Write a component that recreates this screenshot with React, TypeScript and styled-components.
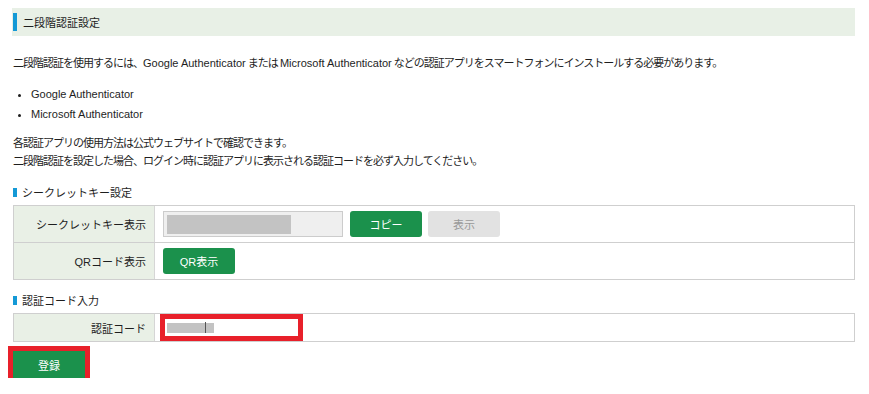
import React from 'react';
import styled, { createGlobalStyle } from 'styled-components';

const GlobalStyle = createGlobalStyle`
  body {
    margin: 0;
    background: #fff;
    color: #1e1e1e;
    font-family: "Liberation Sans", "Noto Sans CJK JP", sans-serif;
    font-size: 11px;
  }
`;

const App = () => {
  return (
    <>
      <GlobalStyle />
      <Page>
        <Header>
          <Accent />
          <HeaderTitle>二段階認証設定</HeaderTitle>
        </Header>

        <Intro>
          二段階認証を使用するには、<Latin>Google Authenticator</Latin> または <Latin>Microsoft Authenticator</Latin> などの認証アプリをスマートフォンにインストールする必要があります。
        </Intro>

        <AppList>
          <li><Latin>Google Authenticator</Latin></li>
          <li><Latin>Microsoft Authenticator</Latin></li>
        </AppList>

        <Notes>
          <p>各認証アプリの使用方法は公式ウェブサイトで確認できます。</p>
          <p>二段階認証を設定した場合、ログイン時に認証アプリに表示される認証コードを必ず入力してください。</p>
        </Notes>

        <SectionTitle>シークレットキー設定</SectionTitle>
        <Table>
          <Row>
            <Label>シークレットキー表示</Label>
            <Value>
              <FakeInput $tone="grey">
                <Mask $width={124} />
              </FakeInput>
              <Button>コピー</Button>
              <Button $disabled>表示</Button>
            </Value>
          </Row>
          <Row>
            <Label>QRコード表示</Label>
            <Value>
              <Button>QR表示</Button>
            </Value>
          </Row>
        </Table>

        <SectionTitle $gap={11}>認証コード入力</SectionTitle>
        <Table>
          <Row $height={27}>
            <Label>認証コード</Label>
            <Value $pad={5}>
              <CodeInput>
                <Mask $width={47} $short />
                <Caret />
              </CodeInput>
            </Value>
          </Row>
        </Table>

        <SubmitRow>
          <SubmitButton>登録</SubmitButton>
        </SubmitRow>
      </Page>
    </>
  );
};

export default App;

const Page = styled.div`
  width: 842px;
  padding: 8px 0 0 13px;
`;

const Header = styled.div`
  height: 28px;
  margin-left: -1px;
  padding-left: 1px;
  background: #e8f0e6;
  display: flex;
  align-items: center;
`;

const Accent = styled.span`
  width: 4px;
  height: 18px;
  background: #1499d6;
`;

const HeaderTitle = styled.span`
  margin-left: 6px;
  font-size: 11px;
`;

const Latin = styled.span`
  letter-spacing: 0;
`;

const Intro = styled.p`
  margin: 18px 0 0;
  line-height: 18px;
  letter-spacing: -1px;
  white-space: nowrap;
`;

const AppList = styled.ul`
  margin: 12px 0 0;
  padding: 0 0 0 18px;
  line-height: 20px;
`;

const Notes = styled.div`
  margin-top: 10px;
  p {
    margin: 0;
    line-height: 18px;
    letter-spacing: -1px;
  }
`;

const SectionTitle = styled.div<{ $gap?: number }>`
  margin-top: ${p => p.$gap ?? 13}px;
  height: 18px;
  display: flex;
  align-items: center;
  &::before {
    content: '';
    width: 4px;
    height: 9px;
    margin-right: 5px;
    background: #1499d6;
  }
`;

const Table = styled.div`
  margin-top: 4px;
  border: 1px solid #cfcfcf;
`;

const Row = styled.div<{ $height?: number }>`
  display: flex;
  height: ${p => p.$height ?? 36}px;
  & + & {
    border-top: 1px solid #cfcfcf;
  }
`;

const Label = styled.div`
  width: 132px;
  padding-right: 8px;
  background: #e9f0e6;
  border-right: 1px solid #d6d6d6;
  display: flex;
  align-items: center;
  justify-content: flex-end;
`;

const Value = styled.div<{ $pad?: number }>`
  flex: 1;
  display: flex;
  align-items: center;
  gap: 6px;
  padding-left: ${p => p.$pad ?? 8}px;
`;

const FakeInput = styled.div<{ $tone?: string }>`
  box-sizing: border-box;
  width: 180px;
  height: 26px;
  border: 1px solid #ccc;
  background: ${p => (p.$tone === 'grey' ? '#efefef' : '#fff')};
  display: flex;
  align-items: center;
  padding-left: 3px;
  margin-right: 1px;
`;

const Mask = styled.span<{ $width: number; $short?: boolean }>`
  display: block;
  width: ${p => p.$width}px;
  height: ${p => (p.$short ? 10 : 19)}px;
  background: #c3c3c3;
`;

const Caret = styled.span`
  position: relative;
  left: -9px;
  width: 1px;
  height: 11px;
  background: #555;
`;

const Button = styled.button<{ $disabled?: boolean }>`
  width: 72px;
  height: 26px;
  border: none;
  border-radius: 3px;
  font-family: inherit;
  font-size: 11px;
  color: ${p => (p.$disabled ? '#999' : '#fff')};
  background: ${p => (p.$disabled ? '#e2e2e2' : '#1b914c')};
  cursor: pointer;
`;

const CodeInput = styled.div`
  box-sizing: border-box;
  width: 143px;
  height: 27px;
  border: 5px solid #e8202a;
  background: #fff;
  display: flex;
  align-items: center;
  padding-left: 2px;
`;

const SubmitRow = styled.div`
  margin-top: 9px;
`;

const SubmitButton = styled.button`
  width: 72px;
  height: 27px;
  border: none;
  border-radius: 0;
  outline: 5px solid #e8202a;
  font-family: inherit;
  font-size: 11px;
  color: #fff;
  background: #1b914c;
`;
